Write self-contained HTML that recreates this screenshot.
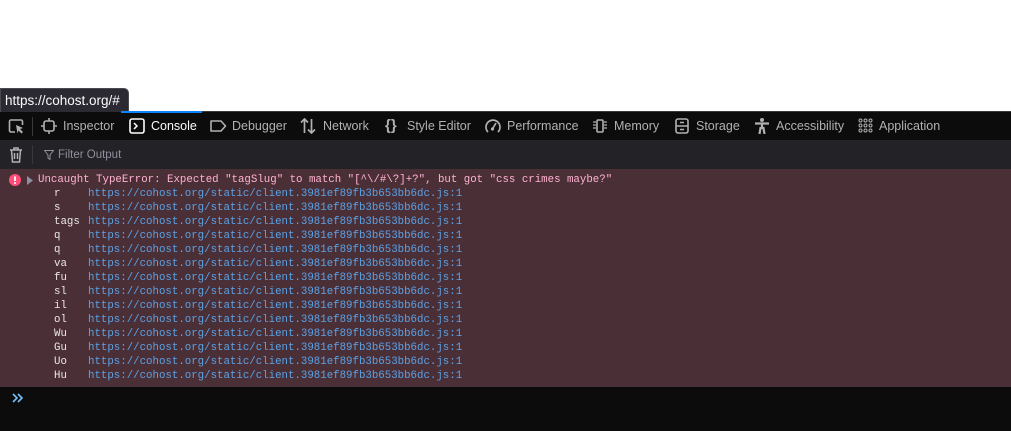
<!DOCTYPE html>
<html><head><meta charset="utf-8"><style>
*{margin:0;padding:0;box-sizing:border-box}
body{width:1011px;height:431px;background:#fff;position:relative;overflow:hidden;font-family:"Liberation Sans",sans-serif}
.abs{position:absolute}
#tip{left:0;top:88px;width:129px;height:24px;background:#2b2a33;border:1px solid #4a4950;border-bottom:none;border-radius:0 5px 0 0;color:#fbfbfe;font-size:13.5px;padding:4px 0 0 4px;z-index:3}
#tb{left:0;top:111px;width:1011px;height:29px;background:#0c0c0d;border-top:1px solid #38383d}
#ul{left:121px;top:111px;width:81px;height:2px;background:#0a84ff;z-index:4}
.t{position:absolute;top:7px;font-size:12.5px;color:#b1b1b3;white-space:nowrap}
.ic{position:absolute;top:6px}
#fb{left:0;top:140px;width:1011px;height:29px;background:#232327}
#err{left:0;top:169px;width:1011px;height:218px;background:#4b2f37}
.m{position:absolute;font-family:"Liberation Mono",monospace;font-size:10.75px;line-height:14px;white-space:pre}
.n{color:#e8e8e8;left:54px}
.u{color:#5aa2e6;left:88px}
#bot{left:0;top:387px;width:1011px;height:44px;background:#0c0c0d}
</style></head><body>
<div class="abs" id="tip">https://cohost.org/#</div>
<div class="abs" id="tb">
<svg class="ic" style="left:8px" width="17" height="16" viewBox="0 0 17 16"><path d="M7 14H3a1.5 1.5 0 0 1-1.5-1.5v-9A1.5 1.5 0 0 1 3 2h10a1.5 1.5 0 0 1 1.5 1.5V7" fill="none" stroke="#b1b1b3" stroke-width="1.6"/><path d="M8 7l7 3-3 1 3 3-1.5 1.5-3-3-1 3z" fill="#b1b1b3"/></svg>
<div class="abs" style="left:32px;top:5px;width:1px;height:19px;background:#38383d"></div>
<svg class="ic" style="left:41px" width="16" height="16" viewBox="0 0 16 16"><rect x="3" y="3" width="10" height="10" rx="2" fill="none" stroke="#b1b1b3" stroke-width="1.6"/><path d="M8 0v3M8 13v3M0 8h3M13 8h3" stroke="#b1b1b3" stroke-width="1.6"/></svg>
<span class="t" style="left:63px">Inspector</span>
<svg class="ic" style="left:129px" width="16" height="16" viewBox="0 0 16 16"><rect x="1" y="1" width="14" height="14" rx="2" fill="none" stroke="#fff" stroke-width="1.6"/><path d="M5 5l3 3-3 3" fill="none" stroke="#fff" stroke-width="1.5"/></svg>
<span class="t" style="left:151px;color:#fbfbfe">Console</span>
<svg class="ic" style="left:209px" width="18" height="16" viewBox="0 0 18 16"><path d="M2 3h10l4.5 5-4.5 5H2z" fill="none" stroke="#b1b1b3" stroke-width="1.6" stroke-linejoin="round"/></svg>
<span class="t" style="left:232px">Debugger</span>
<svg class="ic" style="left:300px" width="16" height="16" viewBox="0 0 16 16"><path d="M4.5 15V1M1 4.5l3.5-3.5 3.5 3.5M11.5 1v14M8 11.5l3.5 3.5 3.5-3.5" fill="none" stroke="#b1b1b3" stroke-width="1.7"/></svg>
<span class="t" style="left:323px">Network</span>
<span class="t" style="left:385px;top:5px;font-size:15px;font-weight:bold;color:#b1b1b3">{}</span>
<span class="t" style="left:407px">Style Editor</span>
<svg class="ic" style="left:485px" width="16" height="16" viewBox="0 0 16 16"><path d="M3 14A7 7 0 1 1 13 14" fill="none" stroke="#b1b1b3" stroke-width="1.7"/><path d="M8 10l3-5" stroke="#b1b1b3" stroke-width="1.7"/><circle cx="7.5" cy="11" r="1.6" fill="#b1b1b3"/></svg>
<span class="t" style="left:507px">Performance</span>
<svg class="ic" style="left:592px" width="16" height="16" viewBox="0 0 16 16"><rect x="5" y="2" width="6" height="12" rx="1" fill="none" stroke="#b1b1b3" stroke-width="1.6"/><path d="M1 4h3M1 7h3M1 10h3M12 4h3M12 7h3M12 10h3" stroke="#b1b1b3" stroke-width="1.2"/></svg>
<span class="t" style="left:614px">Memory</span>
<svg class="ic" style="left:675px" width="14" height="16" viewBox="0 0 14 16"><rect x="1" y="1" width="12" height="14" rx="2" fill="none" stroke="#b1b1b3" stroke-width="1.6"/><path d="M1 8h12M5 4.5h4M5 11.5h4" stroke="#b1b1b3" stroke-width="1.5"/></svg>
<span class="t" style="left:696px">Storage</span>
<svg class="ic" style="left:754px" width="16" height="16" viewBox="0 0 16 16"><circle cx="8" cy="2" r="2" fill="#b1b1b3"/><path d="M1 5.5h14M8 5v5M5.5 16l1-6h3l1 6" fill="none" stroke="#b1b1b3" stroke-width="2.2"/></svg>
<span class="t" style="left:776px">Accessibility</span>
<svg class="ic" style="left:858px" width="15" height="15" viewBox="0 0 15 15" fill="none" stroke="#b1b1b3" stroke-width="1"><circle cx="2.5" cy="2.5" r="1.5"/><circle cx="7.5" cy="2.5" r="1.5"/><circle cx="12.5" cy="2.5" r="1.5"/><circle cx="2.5" cy="7.5" r="1.5"/><circle cx="7.5" cy="7.5" r="1.5"/><circle cx="12.5" cy="7.5" r="1.5"/><circle cx="2.5" cy="12.5" r="1.5"/><circle cx="7.5" cy="12.5" r="1.5"/><circle cx="12.5" cy="12.5" r="1.5"/></svg>
<span class="t" style="left:879px">Application</span>
</div>
<div class="abs" id="ul"></div>
<div class="abs" id="fb">
<svg class="abs" style="left:9px;top:7px" width="14" height="16" viewBox="0 0 14 16"><path d="M1 3h12M5 3V1h4v2M2.5 3l1 12h7l1-12M5.5 6v6M8.5 6v6" fill="none" stroke="#b1b1b3" stroke-width="1.5"/></svg>
<div class="abs" style="left:32px;top:5px;width:1px;height:19px;background:#38383d"></div>
<svg class="abs" style="left:44px;top:10px" width="10" height="10" viewBox="0 0 10 10"><path d="M0.5 0.5h9L6 5v4.5L4 8V5z" fill="none" stroke="#8f8f9d" stroke-width="1"/></svg>
<span class="abs" style="left:58px;top:9px;font-size:11.5px;color:#8f8f9d">Filter Output</span>
</div>
<div class="abs" id="err">
<svg class="abs" style="left:9px;top:5px" width="12" height="12" viewBox="0 0 12 12"><circle cx="6" cy="6" r="6" fill="#ff4f79"/><path d="M6 2.5v4.5" stroke="#fff" stroke-width="1.8"/><circle cx="6" cy="9" r="1" fill="#fff"/></svg>
<svg class="abs" style="left:27px;top:7px" width="6" height="9" viewBox="0 0 6 9"><path d="M0 0l6 4.5L0 9z" fill="#8f8f9d"/></svg>
<div class="m" style="left:38px;top:4px;color:#ffb3d2">Uncaught TypeError: Expected "tagSlug" to match "[^\/#\?]+?", but got "css crimes maybe?"</div>
<div class="m n" style="top:18px">r
s
tags
q
q
va
fu
sl
il
ol
Wu
Gu
Uo
Hu</div>
<div class="m u" style="top:18px">https://cohost.org/static/client.3981ef89fb3b653bb6dc.js:1
https://cohost.org/static/client.3981ef89fb3b653bb6dc.js:1
https://cohost.org/static/client.3981ef89fb3b653bb6dc.js:1
https://cohost.org/static/client.3981ef89fb3b653bb6dc.js:1
https://cohost.org/static/client.3981ef89fb3b653bb6dc.js:1
https://cohost.org/static/client.3981ef89fb3b653bb6dc.js:1
https://cohost.org/static/client.3981ef89fb3b653bb6dc.js:1
https://cohost.org/static/client.3981ef89fb3b653bb6dc.js:1
https://cohost.org/static/client.3981ef89fb3b653bb6dc.js:1
https://cohost.org/static/client.3981ef89fb3b653bb6dc.js:1
https://cohost.org/static/client.3981ef89fb3b653bb6dc.js:1
https://cohost.org/static/client.3981ef89fb3b653bb6dc.js:1
https://cohost.org/static/client.3981ef89fb3b653bb6dc.js:1
https://cohost.org/static/client.3981ef89fb3b653bb6dc.js:1</div>
</div>
<div class="abs" id="bot">
<svg class="abs" style="left:12px;top:6px" width="11" height="10" viewBox="0 0 11 10"><path d="M1 1l4 4-4 4M6 1l4 4-4 4" fill="none" stroke="#75bfff" stroke-width="1.6"/></svg>
</div>
</body></html>
